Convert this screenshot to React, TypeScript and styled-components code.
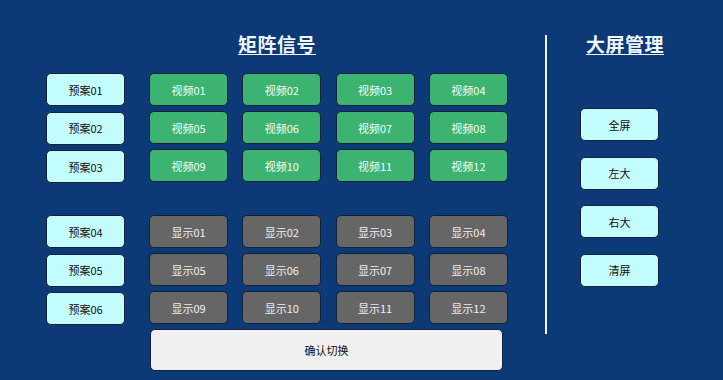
import styled, { createGlobalStyle } from "styled-components"

const GlobalStyle = createGlobalStyle`
  html, body {
    margin: 0;
    padding: 0;
    background: #0b3a77;
  }
  body {
    font-family: "Noto Sans CJK SC", "Liberation Sans", sans-serif;
  }
`

const Screen = styled.div`
  width: 723px;
  height: 380px;
  background: #0b3a77;
  display: flex;
  box-sizing: border-box;
  padding: 33px 0 0 46px;
  overflow: hidden;
`

const LeftPanel = styled.div`
  width: 462px;
  display: flex;
  flex-direction: column;
`

const Title = styled.div`
  height: 40px;
  text-align: center;
  color: #f2f6ff;
  font-size: 19px;
  font-weight: bold;
  line-height: 22px;
  text-decoration: underline;
  text-underline-offset: 2px;
  letter-spacing: 0.5px;
`

const Group = styled.div<{ $gapBelow: number }>`
  display: flex;
  gap: 24px;
  margin-bottom: ${(p) => p.$gapBelow}px;
`

const PresetColumn = styled.div`
  display: grid;
  grid-template-rows: repeat(3, 33px);
  row-gap: 5.5px;
`

const ChannelGrid = styled.div`
  display: grid;
  grid-template-columns: repeat(4, 79px);
  grid-template-rows: repeat(3, 33px);
  column-gap: 14.3px;
  row-gap: 5px;
`

type Tone = "preset" | "video" | "display"

const tones: Record<Tone, { bg: string; fg: string }> = {
  preset: { bg: "#c4fdfd", fg: "#111" },
  video: { bg: "#3cb371", fg: "#f4fff8" },
  display: { bg: "#666666", fg: "#f0f0f0" },
}

const Button = styled.div<{ $tone: Tone }>`
  width: 79px;
  height: 33px;
  box-sizing: border-box;
  border: 1px solid #14213a;
  border-radius: 5px;
  background: ${(p) => tones[p.$tone].bg};
  color: ${(p) => tones[p.$tone].fg};
  display: flex;
  align-items: center;
  justify-content: center;
  font-size: 11px;
`

const ConfirmButton = styled.div`
  margin-left: 104px;
  width: 353px;
  height: 42px;
  box-sizing: border-box;
  border: 1px solid #14213a;
  border-radius: 5px;
  background: #f0f0f0;
  color: #111;
  display: flex;
  align-items: center;
  justify-content: center;
  font-size: 11px;
`

const Divider = styled.div`
  width: 2px;
  height: 299px;
  margin: 2px 0 0 37px;
  background: #eef2fa;
`

const RightPanel = styled.div`
  width: 120px;
  margin-left: 17px;
  display: flex;
  flex-direction: column;
`

const SideTitle = styled(Title)`
  height: 75px;
  text-align: left;
  padding-left: 22px;
`

const SideButtons = styled.div`
  display: flex;
  flex-direction: column;
  gap: 15.5px;
  padding-left: 16px;
`

const pad = (n: number) => String(n).padStart(2, "0")

const App = () => {
  const topPresets = [1, 2, 3]
  const bottomPresets = [4, 5, 6]
  const channels = Array.from({ length: 12 }, (_, i) => i + 1)

  return (
    <>
      <GlobalStyle />
      <Screen>
        <LeftPanel>
          <Title>矩阵信号</Title>
          <Group $gapBelow={32}>
            <PresetColumn>
              {topPresets.map((n) => (
                <Button key={n} $tone="preset">预案{pad(n)}</Button>
              ))}
            </PresetColumn>
            <ChannelGrid>
              {channels.map((n) => (
                <Button key={n} $tone="video">视频{pad(n)}</Button>
              ))}
            </ChannelGrid>
          </Group>
          <Group $gapBelow={4}>
            <PresetColumn>
              {bottomPresets.map((n) => (
                <Button key={n} $tone="preset">预案{pad(n)}</Button>
              ))}
            </PresetColumn>
            <ChannelGrid>
              {channels.map((n) => (
                <Button key={n} $tone="display">显示{pad(n)}</Button>
              ))}
            </ChannelGrid>
          </Group>
          <ConfirmButton>确认切换</ConfirmButton>
        </LeftPanel>
        <Divider />
        <RightPanel>
          <SideTitle>大屏管理</SideTitle>
          <SideButtons>
            {["全屏", "左大", "右大", "清屏"].map((label) => (
              <Button key={label} $tone="preset">{label}</Button>
            ))}
          </SideButtons>
        </RightPanel>
      </Screen>
    </>
  )
}

export default App
